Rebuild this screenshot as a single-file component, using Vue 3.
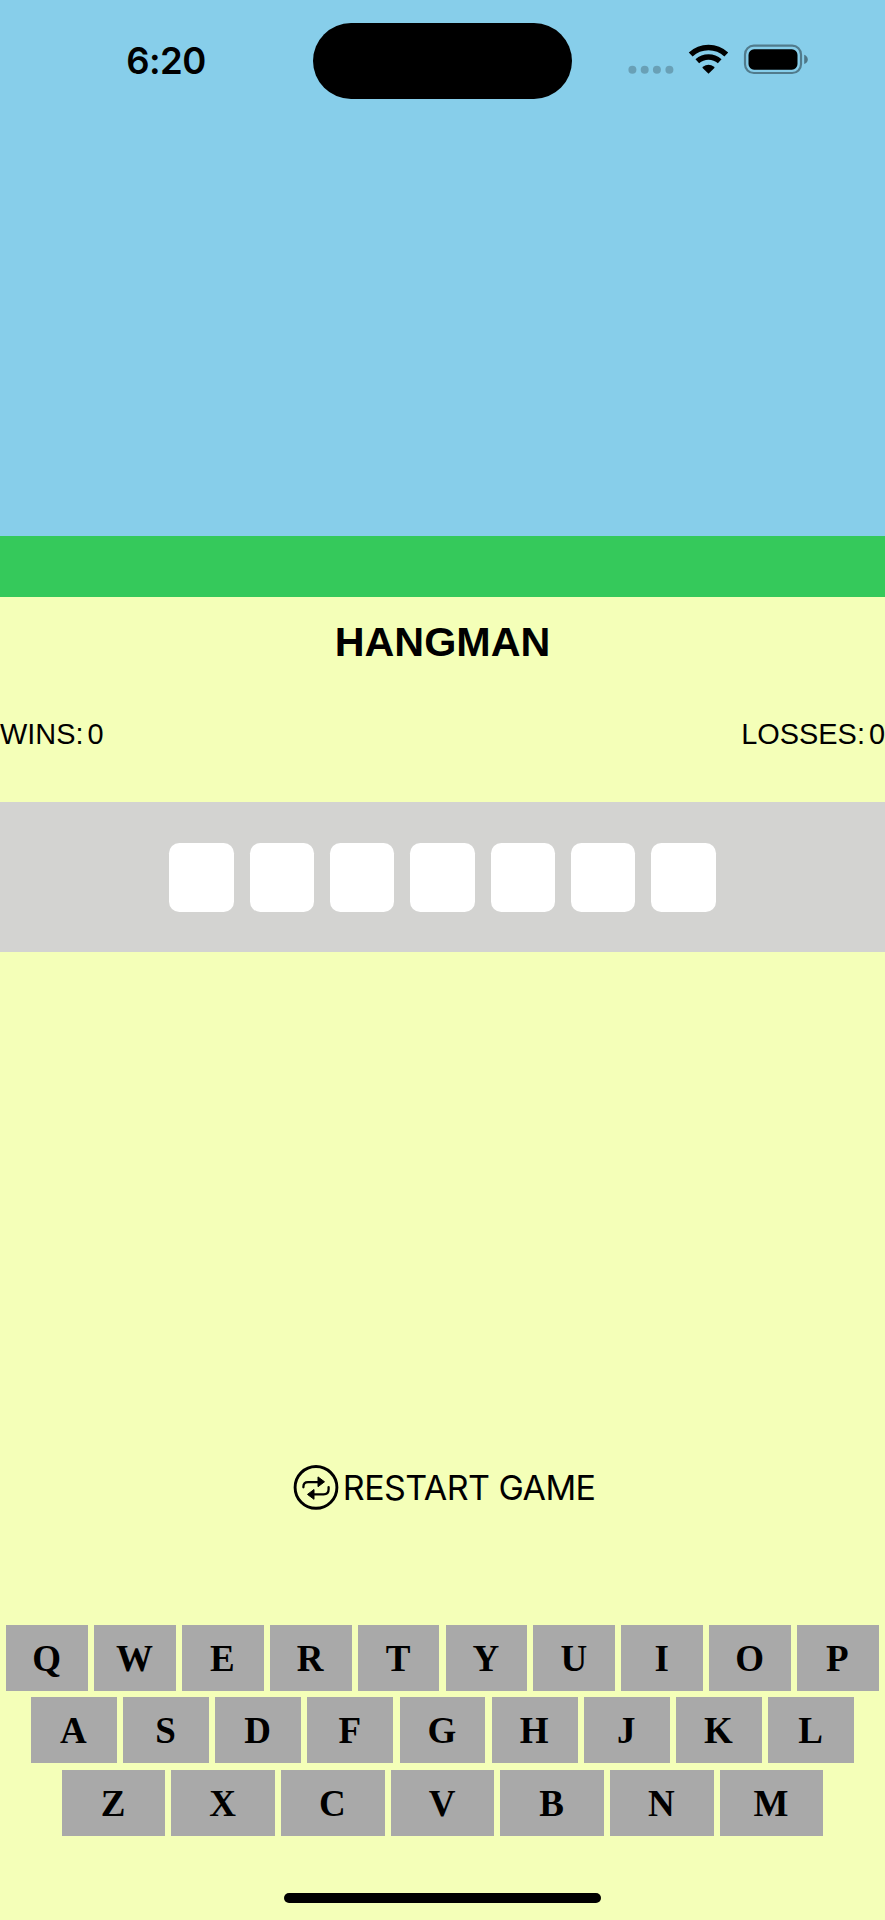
<script setup>
import { ref } from 'vue'

const wins = ref(0)
const losses = ref(0)
const slots = 7
const rows = ['QWERTYUIOP', 'ASDFGHJKL', 'ZXCVBNM']
</script>

<template>
  <main class="screen">
    <section class="sky">
      <header class="status">
        <span class="time">6:20</span>
        <div class="island"></div>
        <svg class="indicators" width="182" height="32" viewBox="0 0 182 32">
          <g fill="#000" fill-opacity="0.22">
            <circle cx="4.4" cy="26.7" r="4" />
            <circle cx="16.7" cy="26.7" r="4" />
            <circle cx="28.9" cy="26.7" r="4" />
            <circle cx="41.4" cy="26.7" r="4" />
          </g>
          <g fill="none" stroke="#000" stroke-width="5.6">
            <path d="M62.7 11.5 A26 26 0 0 1 98.3 11.5" />
            <path d="M69.3 18.3 A16.6 16.6 0 0 1 91.7 18.3" stroke-width="5.4" />
          </g>
          <path d="M80.5 30.8 L74.6 24.9 Q74.3 24.3 74.9 23.8 Q80.5 19.7 86.1 23.8 Q86.7 24.3 86.4 24.9 Z" fill="#000" />
          <rect x="117" y="2.6" width="56" height="27.4" rx="8.8" fill="none" stroke="#000" stroke-opacity="0.4" stroke-width="2.2" />
          <rect x="120.5" y="6.3" width="49" height="20.4" rx="5.6" fill="#000" />
          <path d="M176.2 11.7 Q179.8 13.2 179.8 16.4 Q179.8 19.6 176.2 21.1 Z" fill="#000" fill-opacity="0.42" />
        </svg>
      </header>
    </section>
    <div class="grass"></div>
    <h1 class="title">HANGMAN</h1>
    <div class="scores">
      <p class="score"><span>WINS:</span><span>{{ wins }}</span></p>
      <p class="score"><span>LOSSES:</span><span>{{ losses }}</span></p>
    </div>
    <section class="word">
      <div v-for="n in slots" :key="n" class="slot"></div>
    </section>
    <button class="restart">
      <svg width="46" height="46" viewBox="0 0 46 46">
        <circle cx="23" cy="23.4" r="20.9" fill="none" stroke="#000" stroke-width="2.9" />
        <g fill="none" stroke="#000" stroke-width="2.3" stroke-linecap="round">
          <path d="M10.4 23.3 V22.7 Q10.4 18.1 15 18.1 H25.5" />
          <path d="M35.6 23.2 V25.2 Q35.6 30.3 30.5 30.3 H20" />
        </g>
        <g stroke="#000" stroke-width="1" stroke-linejoin="round">
          <path d="M25 12.9 V22.7 L31.5 17.8 Z" />
          <path d="M21 25.5 V35.3 L14.5 30.4 Z" />
        </g>
      </svg>
      <span class="restart-label">RESTART GAME</span>
    </button>
    <section class="keyboard">
      <div v-for="(row, i) in rows" :key="row" class="row" :class="'row-' + i">
        <button v-for="letter in row" :key="letter" class="key">{{ letter }}</button>
      </div>
    </section>
    <div class="home"></div>
  </main>
</template>

<style>
body {
  margin: 0;
}
</style>

<style scoped>
.screen {
  width: 885px;
  height: 1920px;
  display: flex;
  flex-direction: column;
  background: #f4ffb8;
  color: #000;
  font-family: "Liberation Sans", Arial, sans-serif;
  overflow: hidden;
}
.sky {
  flex: none;
  height: 535.6px;
  background: #87ceea;
}
.status {
  display: grid;
  grid-template-columns: 313.3px 258.4px 1fr;
  padding-top: 23px;
}
.time {
  padding: 14.5px 0 0 126.3px;
  font: 600 36.5px/46px Inter, sans-serif;
  letter-spacing: -0.6px;
}
.island {
  height: 76px;
  border-radius: 38px;
  background: #000;
}
.indicators {
  margin: 20px 0 0 56.3px;
}
.grass {
  flex: none;
  height: 61.8px;
  background: #35c95b;
}
.title {
  flex: none;
  margin: 19.6px 0 0;
  height: 50px;
  font-size: 41.3px;
  line-height: 50px;
  font-weight: 700;
  text-align: center;
}
.scores {
  flex: none;
  display: flex;
  justify-content: space-between;
  margin-top: 49.5px;
  height: 36px;
}
.score {
  display: flex;
  gap: 4px;
  margin: 0;
  font-size: 28.9px;
  line-height: 36px;
}
.word {
  flex: none;
  display: flex;
  justify-content: center;
  align-items: center;
  gap: 16px;
  height: 150px;
  margin-top: 49.9px;
  background: #d3d3d1;
}
.slot {
  width: 64.3px;
  height: 68.6px;
  border-radius: 10.3px;
  background: #fff;
}
button {
  border: 0;
  padding: 0;
  color: inherit;
}
.restart {
  flex: none;
  display: flex;
  align-items: center;
  gap: 3.8px;
  margin: 511.8px 0 0 293px;
  height: 46px;
  background: none;
  font: 400 34px/46px Inter, sans-serif;
  letter-spacing: -0.55px;
  white-space: nowrap;
}
.restart-label {
  padding-top: 2px;
}
.keyboard {
  flex: none;
  display: flex;
  flex-direction: column;
  gap: 6.2px;
  margin-top: 115px;
}
.row {
  display: flex;
  gap: 6.2px;
  height: 66px;
}
.row-0 {
  padding: 0 6.2px;
}
.row-1 {
  padding: 0 30.9px;
}
.row-2 {
  padding: 0 61.8px;
}
.key {
  flex: 1;
  padding: 1px 1px 0 0;
  background: #a9a9a9;
  font: 700 37px/65px "Liberation Serif", "Times New Roman", serif;
}
.home {
  flex: none;
  align-self: center;
  width: 317px;
  height: 10.5px;
  margin-top: 57.4px;
  border-radius: 5.3px;
  background: #000;
}
</style>
